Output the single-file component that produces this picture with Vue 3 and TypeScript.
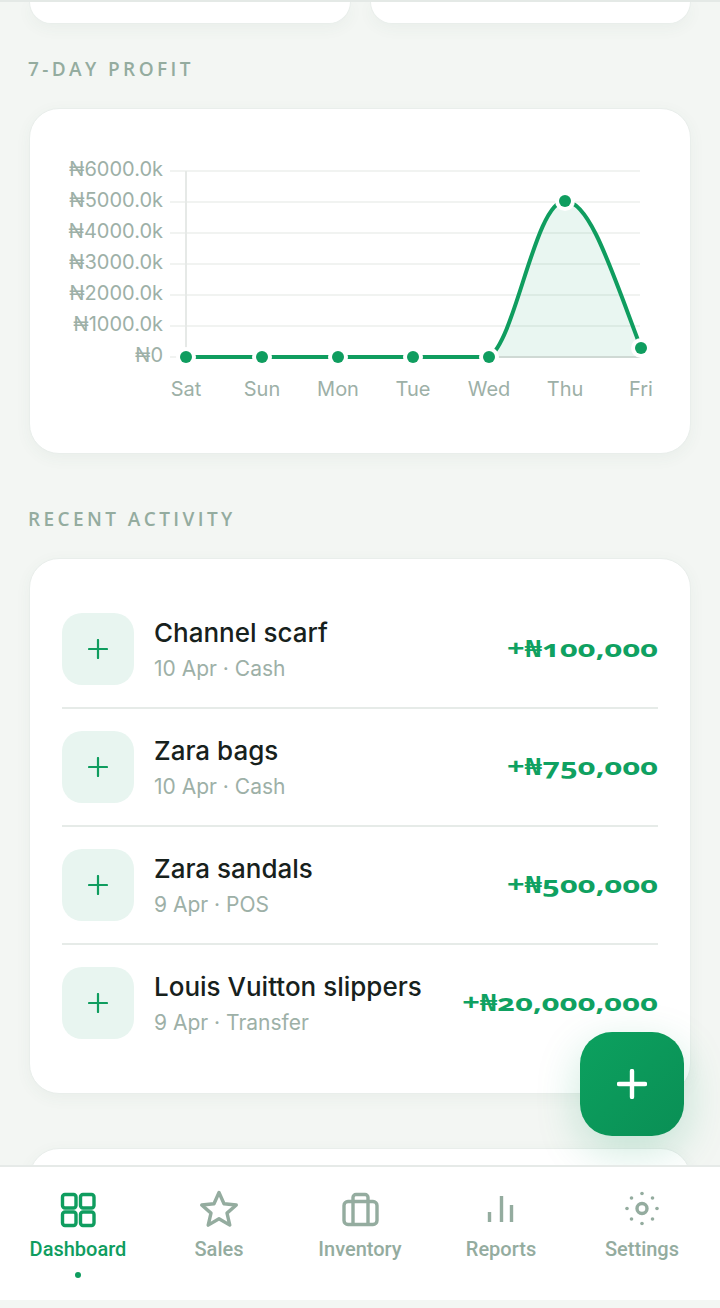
<script setup lang="ts">
import { ref } from "vue";

const yLabels = ["₦6000.0k", "₦5000.0k", "₦4000.0k", "₦3000.0k", "₦2000.0k", "₦1000.0k", "₦0"];
const gridY = [171, 202, 233, 264, 295, 326, 357];

const points = ref([
  { day: "Sat", x: 186, y: 357 },
  { day: "Sun", x: 262, y: 357 },
  { day: "Mon", x: 338, y: 357 },
  { day: "Tue", x: 413, y: 357 },
  { day: "Wed", x: 489, y: 357 },
  { day: "Thu", x: 565, y: 201 },
  { day: "Fri", x: 641, y: 348 },
]);

const curve = "M489 357 C516 340 535 201 565 201 C590 201 612 272 641 348";

const activity = ref([
  { id: 1, name: "Channel scarf", meta: "10 Apr · Cash", amount: "+₦100,000" },
  { id: 2, name: "Zara bags", meta: "10 Apr · Cash", amount: "+₦750,000" },
  { id: 3, name: "Zara sandals", meta: "9 Apr · POS", amount: "+₦500,000" },
  { id: 4, name: "Louis Vuitton slippers", meta: "9 Apr · Transfer", amount: "+₦20,000,000" },
]);

const tabs = ["Dashboard", "Sales", "Inventory", "Reports", "Settings"];
</script>

<template>
  <div class="screen">
    <main class="content">
      <div class="stat-row">
        <div class="stat-card"></div>
        <div class="stat-card"></div>
      </div>

      <h2 class="section-title profit-title">7-DAY PROFIT</h2>
      <section class="card chart-card">
        <!-- viewBox follows the page coordinates of the card -->
        <svg class="chart" width="660" height="344" viewBox="30 109 660 344">
          <line v-for="y in gridY" :key="y" x1="170" x2="640" :y1="y" :y2="y" class="grid" />
          <line x1="186" x2="186" y1="171" y2="357" class="axis" />
          <path :d="curve + ' L641 357 L489 357 Z'" fill="#0f9d5f" fill-opacity="0.09" />
          <line x1="489" x2="641" y1="357" y2="357" class="base" />
          <line x1="186" x2="489" y1="357" y2="357" class="line" />
          <path :d="curve" class="line" />
          <text v-for="(label, i) in yLabels" :key="label" x="163" :y="gridY[i] + 5" text-anchor="end" class="tick">{{ label }}</text>
          <text v-for="p in points" :key="p.day" :x="p.x" y="396" text-anchor="middle" class="tick">{{ p.day }}</text>
          <circle v-for="p in points" :key="p.x" :cx="p.x" :cy="p.y" r="10" fill="#fff" />
          <circle v-for="p in points" :key="p.day + 'dot'" :cx="p.x" :cy="p.y" r="6" fill="#0f9d5f" />
        </svg>
      </section>

      <h2 class="section-title activity-title">RECENT ACTIVITY</h2>
      <section class="card activity-card">
        <div v-for="item in activity" :key="item.id" class="row">
          <div class="row-icon">
            <svg width="20" height="20" viewBox="0 0 20 20"><path d="M10 1v18M1 10h18" stroke="#0f9d5f" stroke-width="2.200" stroke-linecap="round" /></svg>
          </div>
          <div class="row-text">
            <div class="row-name">{{ item.name }}</div>
            <div class="row-meta">{{ item.meta }}</div>
          </div>
          <div class="row-amount">{{ item.amount }}</div>
        </div>
      </section>

      <section class="card next-card"></section>
    </main>

    <button class="fab" aria-label="Add">
      <svg width="30" height="30" viewBox="0 0 30 30"><path d="M15 2v26M2 15h26" stroke="#fff" stroke-width="4.400" stroke-linecap="round" /></svg>
    </button>

    <nav class="tabbar">
      <div v-for="(tab, i) in tabs" :key="tab" class="tab" :class="{ active: i === 0 }">
        <svg class="tab-icon" width="40" height="40" viewBox="0 0 40 40" fill="none" stroke="currentColor" stroke-width="3.400" stroke-linejoin="round">
          <template v-if="i === 0">
            <rect x="4.500" y="5.500" width="13.500" height="13.500" rx="2.500" />
            <rect x="22.500" y="5.500" width="13.500" height="13.500" rx="2.500" />
            <rect x="4.500" y="23" width="13.500" height="13.500" rx="2.500" />
            <rect x="22.500" y="23" width="13.500" height="13.500" rx="2.500" />
          </template>
          <path v-else-if="i === 1" d="M20 3.500l5 11.300 12.300 1.200-9.300 8.100 2.800 12-10.800-6.300-10.800 6.300 2.800-12-9.300-8.100 12.300-1.200z" />
          <template v-else-if="i === 2">
            <rect x="4" y="12.500" width="33" height="23" rx="4" />
            <path d="M13 35V8.500a3 3 0 0 1 3-3h9a3 3 0 0 1 3 3V35" />
          </template>
          <path v-else-if="i === 3" d="M8.500 33V23M20.500 33V7M30.500 33V16" />
          <template v-else>
            <circle cx="20" cy="19.500" r="5" />
            <g fill="currentColor" stroke="none">
              <circle cx="20" cy="4.500" r="1.800" /><circle cx="20" cy="34.500" r="1.800" />
              <circle cx="5" cy="19.500" r="1.800" /><circle cx="35" cy="19.500" r="1.800" />
              <circle cx="9.500" cy="9" r="1.800" /><circle cx="30.500" cy="9" r="1.800" />
              <circle cx="9.500" cy="30" r="1.800" /><circle cx="30.500" cy="30" r="1.800" />
            </g>
          </template>
        </svg>
        <span class="tab-label">{{ tab }}</span>
        <span v-if="i === 0" class="tab-dot"></span>
      </div>
    </nav>
    <div class="home-strip"></div>
  </div>
</template>

<style>
html,
body {
  margin: 0;
  background: #f3f6f3;
}
</style>

<style scoped>
.screen {
  position: relative;
  width: 720px;
  height: 1308px;
  display: flex;
  flex-direction: column;
  overflow: hidden;
  background: #f3f6f3;
  font-family: Inter, "Liberation Sans", sans-serif;
}

.content {
  flex: 1;
  min-height: 0;
  overflow: hidden;
  padding: 0 29px;
  border-top: 2px solid #e4e9e6;
}

.card,
.stat-card {
  box-sizing: border-box;
  background: #fff;
  border: 1px solid #e9eeeb;
  border-radius: 30px;
  box-shadow: 0 4px 16px rgba(60, 90, 75, 0.05);
}

.stat-row {
  display: flex;
  gap: 19px;
}

.stat-card {
  flex: 1;
  height: 22px;
  border-top: none;
  border-radius: 0 0 30px 30px;
}

.section-title {
  margin: 0 0 0 -1px;
  font-family: "Open Sans", sans-serif;
  font-size: 19px;
  font-weight: 600;
  line-height: 24px;
  letter-spacing: 3.400px;
  color: #94ac9f;
}

.profit-title {
  padding-top: 33px;
  padding-bottom: 27px;
}

.chart-card {
  height: 346px;
}

.chart {
  display: block;
}

.grid {
  stroke: #f1f3f1;
  stroke-width: 2;
}

.axis {
  stroke: #e6e9e7;
  stroke-width: 2;
}

.base {
  stroke: #cfd9d4;
  stroke-width: 2;
}

.line {
  fill: none;
  stroke: #0f9d5f;
  stroke-width: 4;
}

.tick {
  font-family: Inter, sans-serif;
  font-size: 20px;
  fill: #9db0a7;
}

.activity-title {
  padding-top: 53px;
  padding-bottom: 27px;
}

.activity-card {
  height: 536px;
  padding: 32px;
}

.row {
  display: flex;
  align-items: center;
  gap: 20px;
  padding: 22px 0;
  border-bottom: 2px solid #e6ebe8;
}

.row:last-child {
  border-bottom: none;
}

.row-icon {
  flex: none;
  width: 72px;
  height: 72px;
  border-radius: 20px;
  background: #e8f5f0;
  display: flex;
  align-items: center;
  justify-content: center;
}

.row-text {
  flex: 1;
  min-width: 0;
  padding-top: 2px;
}

.row-name {
  font-size: 26px;
  font-weight: 500;
  line-height: 32px;
  color: #17211c;
  white-space: nowrap;
}

.row-meta {
  margin-top: 6px;
  font-size: 21px;
  line-height: 28px;
  color: #9db0a7;
  white-space: nowrap;
}

.row-amount {
  margin-top: -3px;
  font-family: "Noto Sans", sans-serif;
  font-size: 24px;
  font-weight: 700;
  font-variant-numeric: oldstyle-nums;
  line-height: 32px;
  color: #0fa161;
  white-space: nowrap;
  transform: scaleX(1.280);
  transform-origin: right center;
}

.next-card {
  height: 200px;
  margin-top: 54px;
}

.fab {
  position: absolute;
  left: 580px;
  top: 1032px;
  width: 104px;
  height: 104px;
  padding: 0;
  border: none;
  border-radius: 32px;
  background: linear-gradient(135deg, #0ca15f, #0a8f55);
  box-shadow: 0 14px 44px rgba(15, 157, 95, 0.22);
  display: flex;
  align-items: center;
  justify-content: center;
}

.tabbar {
  position: relative;
  flex: none;
  box-sizing: border-box;
  height: 135px;
  padding: 0 7.500px;
  display: flex;
  background: #fff;
  border-top: 2px solid #e6eae8;
}

.tab {
  position: relative;
  flex: 1;
  display: flex;
  flex-direction: column;
  align-items: center;
  padding-top: 22px;
  color: #94ac9f;
}

.tab.active {
  color: #0f9d5f;
}

.tab-label {
  margin-top: 7px;
  font-family: Roboto, sans-serif;
  font-size: 20px;
  font-weight: 500;
  line-height: 26px;
  white-space: nowrap;
}

.tab-dot {
  margin-top: 10px;
  width: 6px;
  height: 6px;
  border-radius: 50%;
  background: #0f9d5f;
}

.home-strip {
  flex: none;
  height: 8px;
  background: #f3f6f3;
}
</style>
